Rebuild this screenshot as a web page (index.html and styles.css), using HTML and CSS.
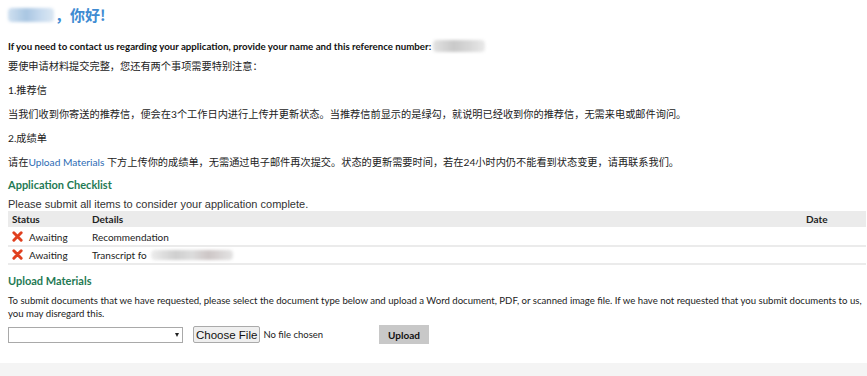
FILE: index.html
```html
<!DOCTYPE html>
<html lang="en">
<head>
    <meta charset="UTF-8">
    <title>Application Status</title>
    <link rel="stylesheet" href="styles.css">
</head>
<body>
    <div class="page">
        <h1 class="hello"><span class="blur blur-name"></span>，你好!</h1>

        <p class="contact">If you need to contact us regarding your application, provide your name and this reference number:<span class="blur blur-ref"></span></p>
        <p class="cn">要使申请材料提交完整，您还有两个事项需要特别注意：</p>
        <p class="cn">1.推荐信</p>
        <p class="cn">当我们收到你寄送的推荐信，便会在3个工作日内进行上传并更新状态。当推荐信前显示的是绿勾，就说明已经收到你的推荐信，无需来电或邮件询问。</p>
        <p class="cn">2.成绩单</p>
        <p class="cn">请在<span class="link">Upload Materials</span> 下方上传你的成绩单，无需通过电子邮件再次提交。状态的更新需要时间，若在24小时内仍不能看到状态变更，请再联系我们。</p>

        <h2 class="section">Application Checklist</h2>
        <p class="intro">Please submit all items to consider your application complete.</p>
        <table class="checklist">
            <thead>
                <tr>
                    <th class="col-status">Status</th>
                    <th>Details</th>
                    <th class="col-date">Date</th>
                </tr>
            </thead>
            <tbody>
                <tr>
                    <td><span class="x-icon"><svg viewBox="0 0 12 12" width="11" height="11"><path d="M2 2 L10 10 M10 2 L2 10" stroke="#e0401f" stroke-width="3.2" stroke-linecap="round"/></svg></span>Awaiting</td>
                    <td>Recommendation</td>
                    <td></td>
                </tr>
                <tr>
                    <td><span class="x-icon"><svg viewBox="0 0 12 12" width="11" height="11"><path d="M2 2 L10 10 M10 2 L2 10" stroke="#e0401f" stroke-width="3.2" stroke-linecap="round"/></svg></span>Awaiting</td>
                    <td>Transcript fo<span class="blur blur-school"></span></td>
                    <td></td>
                </tr>
            </tbody>
        </table>

        <h2 class="section">Upload Materials</h2>
        <p class="upload-note">To submit documents that we have requested, please select the document type below and upload a Word document, PDF, or scanned image file. If we have not requested that you submit documents to us, you may disregard this.</p>
        <div class="upload-row">
            <span class="select-wrap"><select class="doc-type"><option></option></select></span>
            <span class="file-pick"><button class="choose">Choose File</button><span class="no-file">No file chosen</span></span>
            <button class="upload-btn">Upload</button>
        </div>
    </div>
    <div class="footer"></div>
</body>
</html>
```

FILE: styles.css
```css
body {
    margin: 0;
    background: #fff;
    color: #222;
    font-family: Lato, "Noto Sans CJK SC", sans-serif;
}
.page {
    padding: 4px 1px 19px 8px;
}
.hello {
    margin: 0 0 12px;
    font-family: "Noto Sans CJK SC", sans-serif;
    font-size: 15px;
    font-weight: 600;
    line-height: 22px;
    color: #3e8bd2;
    display: flex;
    align-items: center;
}
.blur {
    display: inline-block;
    filter: blur(1.5px);
    border-radius: 4px;
}
.blur-name {
    width: 46px;
    height: 14px;
    margin-right: 1px;
    background: linear-gradient(90deg, #cfe0f0, #a9c6e2 40%, #c5d9ee 70%, #dbe7f3);
}
.blur-ref {
    width: 52px;
    height: 12px;
    margin-left: 2px;
    vertical-align: -2px;
    background: linear-gradient(90deg, #e2e2e2, #c9c9c9 40%, #d7d7d7 70%, #e9e9e9);
}
.blur-school {
    width: 82px;
    height: 10px;
    margin-left: 4px;
    vertical-align: -1px;
    background: linear-gradient(90deg, #ececec, #cfcfcf 30%, #dcdcdc 50%, #cdc6c6 70%, #e4e4e4);
}
.contact {
    margin: 0 0 4px;
    font-size: 9.7px;
    font-weight: bold;
    line-height: 16px;
    color: #111;
}
.cn {
    margin: 0 0 8px;
    font-size: 10.2px;
    line-height: 16px;
    color: #222;
}
.link {
    color: #2f6db5;
}
.section {
    margin: 3px 0 6px;
    font-size: 11px;
    font-weight: bold;
    line-height: 14px;
    color: #1f7a54;
}
.intro {
    margin: 0;
    font-family: "Liberation Sans", Arial, sans-serif;
    font-size: 11px;
    line-height: 13px;
    color: #333;
}
.checklist {
    width: 100%;
    border-collapse: collapse;
    font-size: 10px;
    margin-bottom: 9px;
}
.checklist th {
    background: #ebebeb;
    text-align: left;
    font-weight: bold;
    padding: 0 4px;
    height: 16px;
    border-bottom: 2px solid #fff;
}
.checklist td {
    padding: 0 4px;
    height: 16px;
    border-bottom: 2px solid #ebebeb;
}
.col-status {
    width: 72px;
}
.col-date {
    width: 56px;
}
.x-icon {
    display: inline-block;
    width: 11px;
    height: 11px;
    margin-right: 6px;
    vertical-align: -1px;
}
.x-icon svg {
    display: block;
}
.upload-note {
    margin: 0 0 5px;
    font-size: 9.6px;
    line-height: 13px;
    color: #222;
}
.upload-row {
    display: flex;
    align-items: center;
}
.select-wrap {
    position: relative;
    display: inline-block;
}
.select-wrap::after {
    content: "";
    position: absolute;
    right: 4px;
    top: 6px;
    border-left: 2.5px solid transparent;
    border-right: 2.5px solid transparent;
    border-top: 4px solid #222;
    pointer-events: none;
}
.doc-type {
    display: block;
    appearance: none;
    width: 175px;
    height: 16px;
    font-size: 10px;
    border: 1px solid #a9a9a9;
    background: #fff;
    margin: 0;
}
.file-pick {
    display: flex;
    align-items: center;
    margin-left: 10px;
    width: 186px;
}
.choose {
    font-family: "Liberation Sans", Arial, sans-serif;
    font-size: 11.5px;
    height: 17px;
    padding: 0 2px;
    border: 1px solid #aaa;
    border-radius: 2px;
    background: #efefef;
    color: #111;
    margin: 0;
}
.no-file {
    margin-left: 3px;
    font-size: 9.5px;
}
.upload-btn {
    font-family: Lato, sans-serif;
    font-size: 10px;
    font-weight: bold;
    height: 19px;
    width: 50px;
    padding: 0;
    border: 0;
    background: #c8c8c8;
    color: #111;
}
.footer {
    height: 14px;
    background: #f4f4f4;
}
```
